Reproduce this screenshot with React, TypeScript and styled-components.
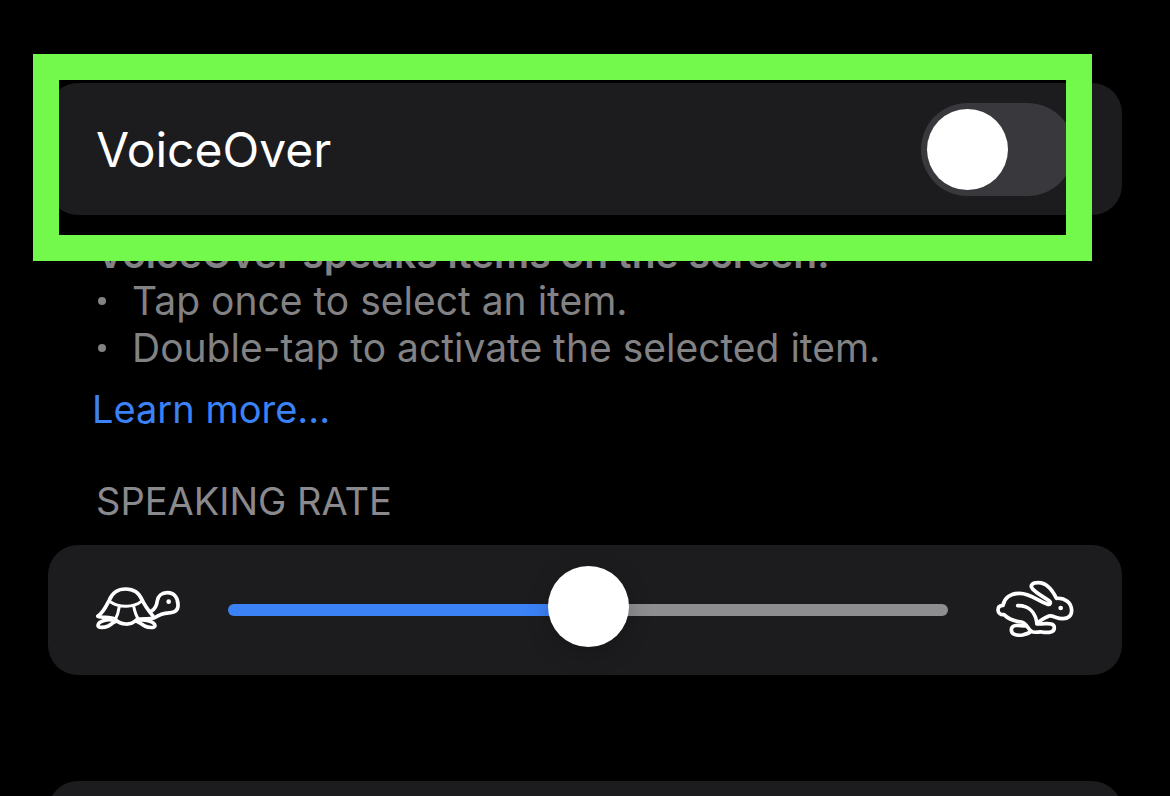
import React, { useState } from "react";
import styled, { createGlobalStyle } from "styled-components";

const GlobalStyle = createGlobalStyle`
  *, *::before, *::after { box-sizing: border-box; }
  body {
    margin: 0;
    background: #000;
    color: #fff;
    font-family: Inter, "Liberation Sans", sans-serif;
  }
`;

const Page = styled.main`
  height: 100vh;
  overflow: hidden;
  padding: 83px 48px 0;
  background: #000;
`;

const Card = styled.div`
  display: flex;
  align-items: center;
  gap: 48px;
  min-height: 130px;
  padding: 0 48px;
  border-radius: 30px;
  background: #1c1c1e;
`;

const ToggleGroup = styled.div`
  position: relative;
`;

const ToggleCard = styled(Card)`
  justify-content: space-between;
  padding: 20px 48px 19px;
`;

const ToggleLabel = styled.label`
  font-size: 48px;
  line-height: 60px;
`;

const Switch = styled.input`
  appearance: none;
  flex: none;
  width: 153px;
  height: 93px;
  margin: 0;
  padding: 6px;
  border-radius: 47px;
  background: #39393d;

  &::before {
    content: "";
    display: block;
    width: 81px;
    height: 81px;
    border-radius: 50%;
    background: #fff;
  }

  &:checked {
    background: #30d158;
  }

  &:checked::before {
    margin-left: 60px;
  }
`;

const Highlight = styled.div`
  position: absolute;
  inset: -29px 30px -46px -15px;
  border: 26px solid #73f94b;
  pointer-events: none;
`;

const Note = styled.section`
  margin-top: 15px;
  padding: 0 48px;
  color: #828284;
  font-size: 39px;
  line-height: 47px;
`;

const NoteTitle = styled.h2`
  margin: 0;
  font-size: inherit;
  font-weight: 600;
`;

const NoteList = styled.ul`
  margin: 0;
  padding: 0;
  list-style: none;
`;

const NoteItem = styled.li`
  display: flex;
  align-items: center;
  gap: 26px;
  padding-left: 2px;

  &::before {
    content: "";
    width: 8px;
    height: 8px;
    border-radius: 50%;
    background: currentColor;
  }
`;

const LearnMore = styled.a`
  display: block;
  width: fit-content;
  margin: 15px 0 0 -4px;
  color: #3b82f7;
  font-size: 38px;
  text-decoration: none;
`;

const SectionLabel = styled.label`
  display: block;
  margin: 45px 48px 20px;
  color: #8a8a8e;
  font-size: 38px;
  line-height: 47px;
`;

const Slider = styled.input<{ $percent: number }>`
  appearance: none;
  flex: 1;
  min-width: 0;
  height: 12px;
  margin: 0;
  background: none;

  &::-webkit-slider-runnable-track {
    height: 12px;
    border-radius: 6px;
    background: linear-gradient(
      to right,
      #3b82f7 ${(p) => p.$percent}%,
      #8e8e90 ${(p) => p.$percent}%
    );
  }

  &::-webkit-slider-thumb {
    appearance: none;
    width: 81px;
    height: 81px;
    margin-top: -38px;
    border-radius: 50%;
    background: #fff;
    box-shadow: 0 6px 24px rgba(0, 0, 0, 0.2);
  }
`;

const Glyph = styled.svg`
  flex: none;
  fill: none;
  stroke: #fff;
  stroke-width: 11;
  stroke-linecap: round;
  stroke-linejoin: round;
`;

const NextCard = styled(Card)`
  margin-top: 106px;
`;

const Tortoise = () => (
  <Glyph width="84" height="56" viewBox="33 21 252 168" aria-hidden="true">
    <path d="M39 123C56 112 63 94 73 75C82 53 98 42 122 42C147 42 163 54 172 76C180 94 190 106 203 122" />
    <path d="M77 81C101 98 146 98 169 79" strokeWidth="9" />
    <path d="M103 94C101 108 98 120 92 131M146 94C149 108 152 122 160 131" strokeWidth="9" />
    <path d="M39 124C52 130 76 124 90 133C108 151 137 152 154 135C170 128 192 134 206 129C222 122 224 117 240 115C258 113 279 114 279 92C280 68 267 53 247 53C229 53 219 64 217 77C215 92 208 104 198 109" />
    <path d="M86 137C71 130 40 138 39 151C39 160 58 158 70 153C78 149 82 144 91 140" />
    <path d="M159 137C174 130 209 140 210 152C210 160 190 158 179 153C170 148 166 144 157 140" />
    <circle cx="251" cy="80" r="7" fill="#fff" stroke="none" />
  </Glyph>
);

const Hare = () => (
  <Glyph width="78" height="64" viewBox="33 24 234 192" aria-hidden="true">
    <path d="M156 161C152 130 134 106 98 107" />
    <path d="M188 103C156 91 136 70 104 70C76 70 58 84 54 106C44 106 39 111 39 120C39 129 47 135 57 134C70 147 86 154 110 156C126 159 128 178 140 185C152 190 164 183 176 187C190 188 208 188 208 173C208 160 194 160 178 161C170 161 164 163 156 161C168 148 178 144 192 138C206 136 216 147 234 146C249 146 260 138 260 121C259 98 241 83 214 85C203 62 184 38 160 38C143 38 132 46 144 58C157 71 178 82 193 93C199 98 195 105 188 103" />
    <path d="M120 168C104 166 79 162 79 180C79 196 100 198 116 194C126 192 134 188 138 183" />
    <circle cx="227" cy="114" r="7" fill="#fff" stroke="none" />
  </Glyph>
);

export default function App() {
  const [enabled, setEnabled] = useState(false);
  const [rate, setRate] = useState(50);

  return (
    <>
      <GlobalStyle />
      <Page>
        <ToggleGroup>
          <ToggleCard>
            <ToggleLabel htmlFor="voiceover">VoiceOver</ToggleLabel>
            <Switch
              id="voiceover"
              type="checkbox"
              role="switch"
              checked={enabled}
              onChange={(e) => setEnabled(e.target.checked)}
            />
          </ToggleCard>
          <Highlight />
        </ToggleGroup>

        <Note>
          <NoteTitle>VoiceOver speaks items on the screen:</NoteTitle>
          <NoteList>
            <NoteItem>Tap once to select an item.</NoteItem>
            <NoteItem>Double-tap to activate the selected item.</NoteItem>
          </NoteList>
          <LearnMore href="#learn-more">Learn more...</LearnMore>
        </Note>

        <SectionLabel htmlFor="rate">SPEAKING RATE</SectionLabel>
        <Card>
          <Tortoise />
          <Slider
            id="rate"
            type="range"
            min={0}
            max={100}
            value={rate}
            $percent={rate}
            onChange={(e) => setRate(Number(e.target.value))}
          />
          <Hare />
        </Card>
        <NextCard />
      </Page>
    </>
  );
}
